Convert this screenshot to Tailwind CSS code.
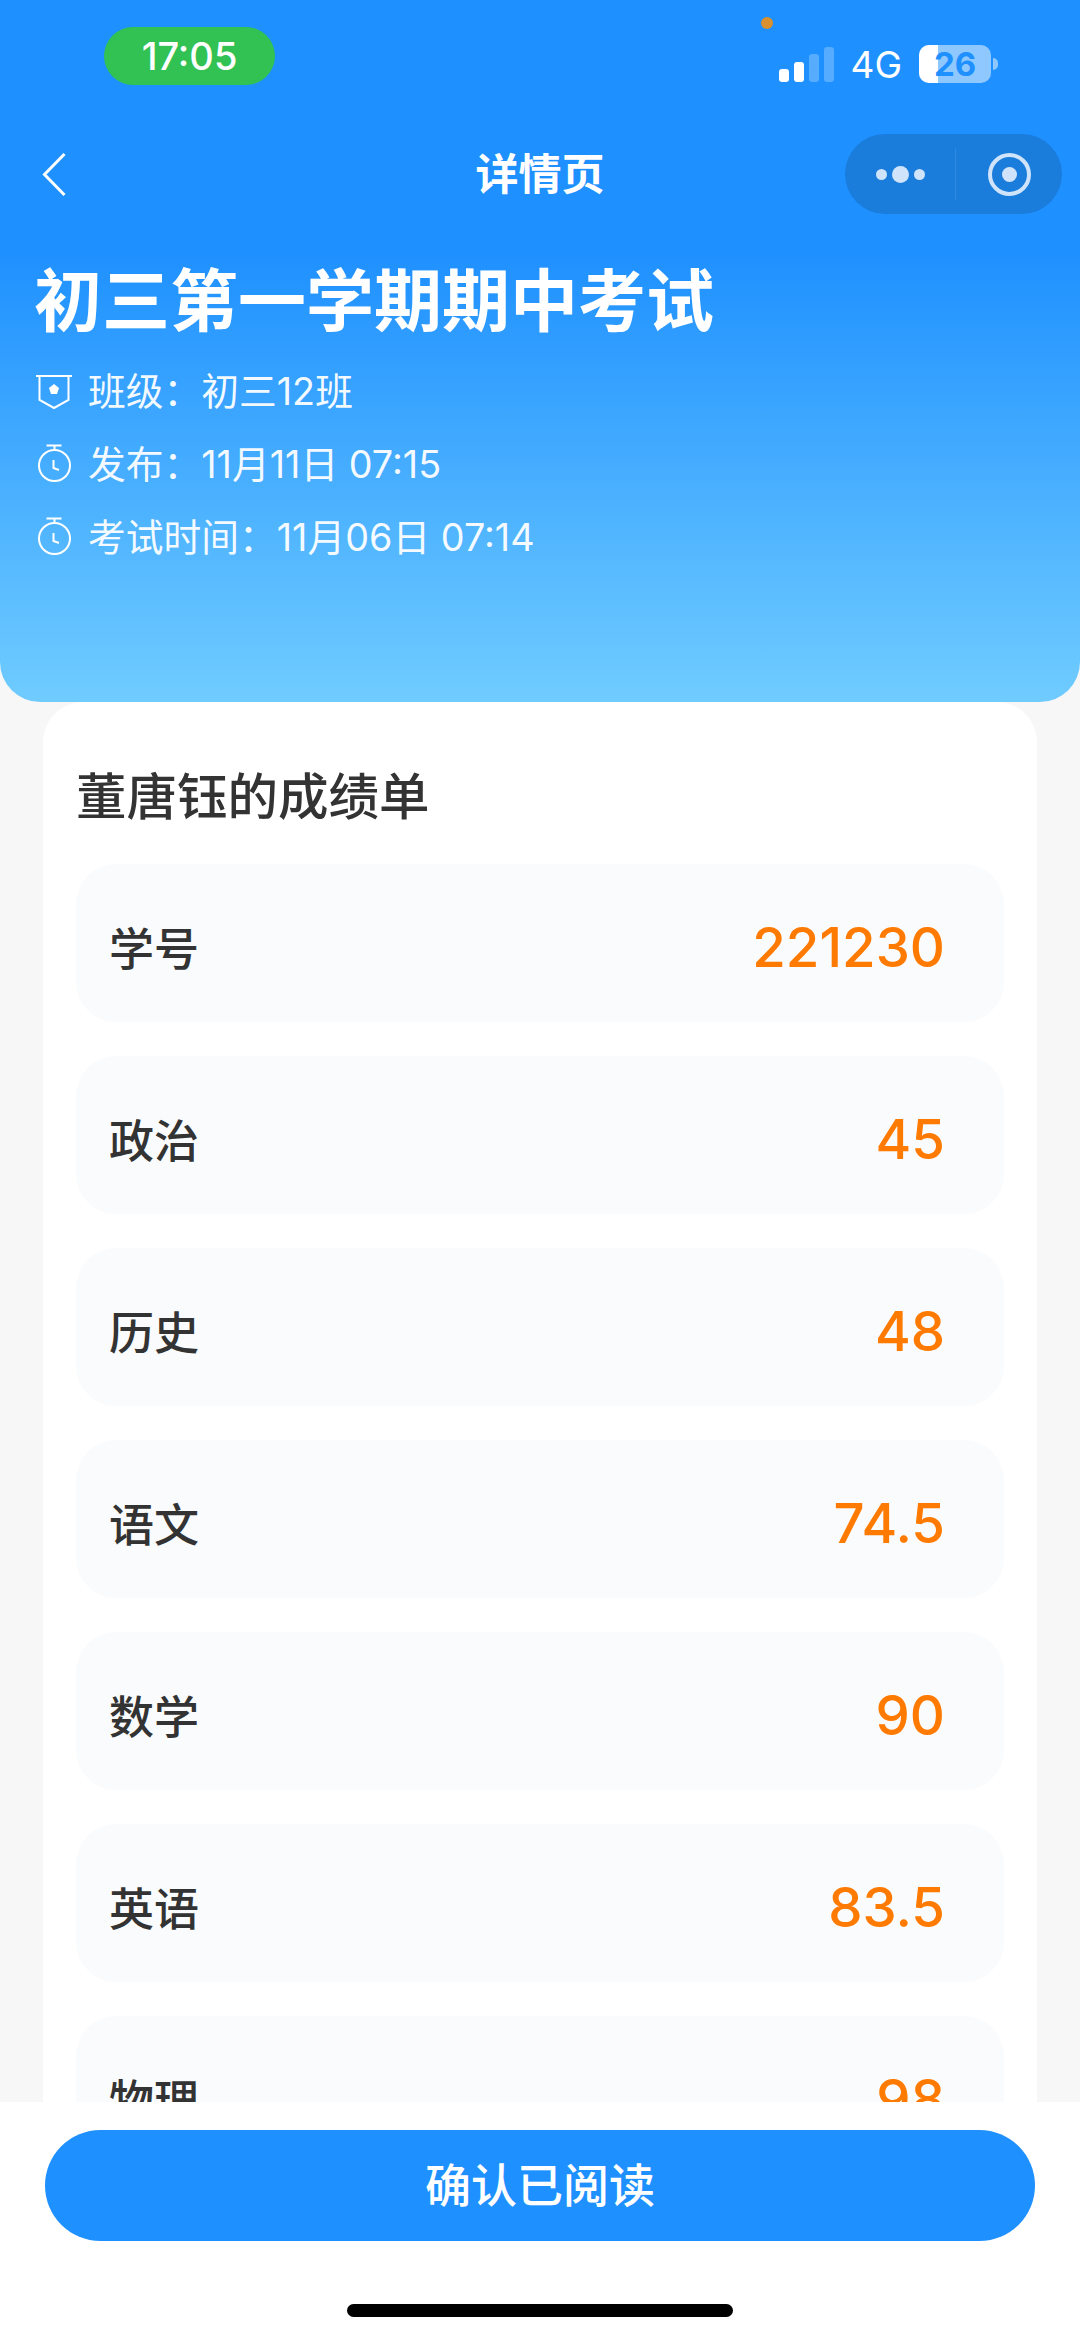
<!DOCTYPE html>
<html lang="zh-CN">
<head>
<meta charset="utf-8">
<script src="https://cdn.jsdelivr.net/npm/@tailwindcss/browser@4"></script>
<title>详情页</title>
</head>
<body class="m-0">
<div class="relative w-[1080px] h-[2337px] overflow-hidden bg-[#f7f7f7] font-['Inter','Noto_Sans_CJK_SC',sans-serif]">
  <header class="h-[702px] rounded-b-[40px] bg-[linear-gradient(180deg,#1e90ff_0,#1e90ff_250px,#70ccff_100%)] text-white flex flex-col">
    <div class="relative h-[112px] flex items-start justify-between pt-[27px]">
      <div class="ml-[104px] w-[171px] h-[58px] rounded-full bg-[#32c253] flex items-center justify-center text-[38px] font-medium leading-none">17:05</div>
      <span class="absolute left-[761px] top-[17px] w-[12px] h-[12px] rounded-full bg-[#d9902f]"></span>
      <div class="flex items-center mr-[82px] mt-[18px] h-[38px]">
        <div class="flex items-end gap-[5px] h-[35px] mt-[1px]">
          <span class="block w-[10px] h-[13px] rounded-[3px] bg-white"></span>
          <span class="block w-[10px] h-[20px] rounded-[3px] bg-white"></span>
          <span class="block w-[10px] h-[28px] rounded-[3px] bg-white/25"></span>
          <span class="block w-[10px] h-[35px] rounded-[3px] bg-white/25"></span>
        </div>
        <span class="ml-[16px] text-[37px] leading-none">4G</span>
        <div class="relative ml-[17px] w-[72px] h-[38px] rounded-[10px] bg-white/50 overflow-hidden flex items-center justify-center">
          <span class="absolute left-0 top-0 h-full w-[19px] bg-white"></span>
          <span class="relative text-[#1e90ff] text-[33px] font-bold leading-none">26</span>
        </div>
        <span class="ml-[2px] w-[5px] h-[12px] rounded-r-full bg-white/50"></span>
      </div>
    </div>
    <div class="relative h-[80px] flex items-center justify-center mt-[22px]">
      <svg class="absolute left-[40px] top-[18px]" width="30" height="46" viewBox="0 0 30 46" fill="none" stroke="white" stroke-width="3"><path d="M24.5 2 L4.5 22.5 L24.5 43"/></svg>
      <h1 class="text-[43px] font-bold leading-none">详情页</h1>
      <div class="absolute left-[845px] top-0 w-[217px] h-[80px] rounded-full bg-[#1a7cdb] flex items-center">
        <div class="w-[110px] flex items-center justify-center gap-[5px]">
          <span class="w-[11px] h-[11px] rounded-full bg-[#cfe4fa]"></span>
          <span class="w-[17px] h-[17px] rounded-full bg-[#cfe4fa]"></span>
          <span class="w-[11px] h-[11px] rounded-full bg-[#cfe4fa]"></span>
        </div>
        <div class="w-px h-[52px] bg-white/10"></div>
        <div class="flex-1 flex items-center justify-center">
          <div class="w-[43px] h-[43px] rounded-full border-[4px] border-[#cfe4fa] flex items-center justify-center">
            <span class="w-[15px] h-[15px] rounded-full bg-[#cfe4fa]"></span>
          </div>
        </div>
      </div>
    </div>
    <div class="pl-[34px] mt-[41px]">
      <h2 class="text-[68px] font-bold leading-[92px]">初三第一学期期中考试</h2>
      <ul class="mt-[8px] ml-[2px] flex flex-col text-[37.75px] text-white/95">
        <li class="h-[73px] flex items-center gap-[16px]">
          <svg width="36" height="36" viewBox="0 0 36 36" fill="none" stroke="white" stroke-width="2"><path d="M0 2 H36 M3.5 2 V26 L18 34 L32.5 26 V2"/><path d="M18 10 L23 14 L21 20 H15 L13 14 Z" fill="white" stroke="none"/></svg>
          <span>班级：初三12班</span>
        </li>
        <li class="h-[73px] flex items-center gap-[16px]">
          <svg width="36" height="42" viewBox="0 0 36 42" fill="none" stroke="white" stroke-width="2"><circle cx="18.5" cy="21.5" r="15.5"/><path d="M10.5 1.5 H25.5 M18.5 1.5 V6"/><path d="M17.5 16 V24 L23 26"/></svg>
          <span>发布：11月11日 07:15</span>
        </li>
        <li class="h-[73px] flex items-center gap-[16px]">
          <svg width="36" height="42" viewBox="0 0 36 42" fill="none" stroke="white" stroke-width="2"><circle cx="18.5" cy="21.5" r="15.5"/><path d="M10.5 1.5 H25.5 M18.5 1.5 V6"/><path d="M17.5 16 V24 L23 26"/></svg>
          <span>考试时间：11月06日 07:14</span>
        </li>
      </ul>
    </div>
  </header>

  <main class="mx-[43px] rounded-[40px] bg-white px-[33px] pt-[60px] pb-[40px]">
    <h3 class="text-[50.5px] leading-[70px] text-[#333] font-medium">董唐钰的成绩单</h3>
    <div class="mt-[32px] flex flex-col gap-[34px]">
      <div class="h-[158px] rounded-[40px] bg-[#fafbfc] pl-[33px] pr-[59px] flex items-center justify-between"><span class="pt-[14px] text-[45px] font-medium text-[#333]">学号</span><span class="pt-[10px] text-[54.5px] font-medium text-[#ff7a00]">221230</span></div>
      <div class="h-[158px] rounded-[40px] bg-[#fafbfc] pl-[33px] pr-[59px] flex items-center justify-between"><span class="pt-[14px] text-[45px] font-medium text-[#333]">政治</span><span class="pt-[10px] text-[54.5px] font-medium text-[#ff7a00]">45</span></div>
      <div class="h-[158px] rounded-[40px] bg-[#fafbfc] pl-[33px] pr-[59px] flex items-center justify-between"><span class="pt-[14px] text-[45px] font-medium text-[#333]">历史</span><span class="pt-[10px] text-[54.5px] font-medium text-[#ff7a00]">48</span></div>
      <div class="h-[158px] rounded-[40px] bg-[#fafbfc] pl-[33px] pr-[59px] flex items-center justify-between"><span class="pt-[14px] text-[45px] font-medium text-[#333]">语文</span><span class="pt-[10px] text-[54.5px] font-medium text-[#ff7a00]">74.5</span></div>
      <div class="h-[158px] rounded-[40px] bg-[#fafbfc] pl-[33px] pr-[59px] flex items-center justify-between"><span class="pt-[14px] text-[45px] font-medium text-[#333]">数学</span><span class="pt-[10px] text-[54.5px] font-medium text-[#ff7a00]">90</span></div>
      <div class="h-[158px] rounded-[40px] bg-[#fafbfc] pl-[33px] pr-[59px] flex items-center justify-between"><span class="pt-[14px] text-[45px] font-medium text-[#333]">英语</span><span class="pt-[10px] text-[54.5px] font-medium text-[#ff7a00]">83.5</span></div>
      <div class="h-[158px] rounded-[40px] bg-[#fafbfc] pl-[33px] pr-[59px] flex items-center justify-between"><span class="pt-[14px] text-[45px] font-medium text-[#333]">物理</span><span class="pt-[10px] text-[54.5px] font-medium text-[#ff7a00]">98</span></div>
    </div>
  </main>

  <footer class="absolute left-0 right-0 bottom-0 h-[235px] bg-white flex flex-col items-center">
    <button class="mt-[28px] w-[990px] h-[111px] rounded-full bg-[#1e90ff] text-white text-[46px] font-medium">确认已阅读</button>
    <div class="mt-[63px] w-[386px] h-[13px] rounded-full bg-black"></div>
  </footer>
</div>
</body>
</html>
